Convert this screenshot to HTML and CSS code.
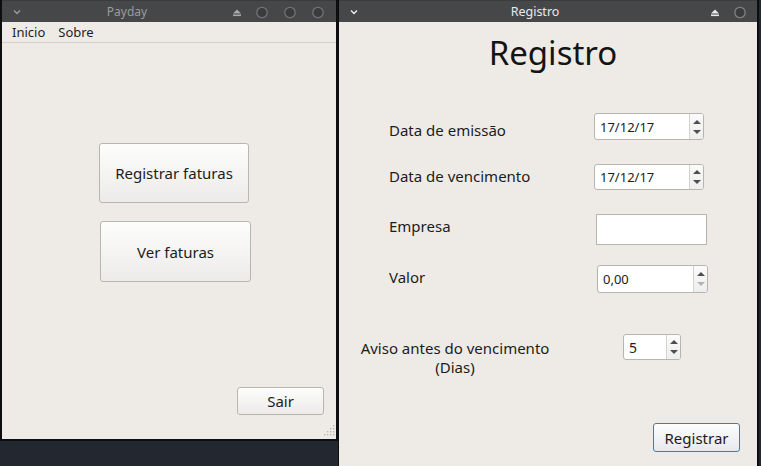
FILE: index.html
```html
<!DOCTYPE html>
<html lang="pt">
<head>
<meta charset="utf-8">
<title>Payday</title>
<link rel="stylesheet" href="styles.css">
</head>
<body>
<div class="win win-left">
  <div class="titlebar inactive">
    <svg class="chev" width="28" height="22" viewBox="0 0 28 22"><polyline points="12,9.5 15,12.5 18,9.5"/></svg>
    <div class="title">Payday</div>
    <svg class="ctrls" width="110" height="22" viewBox="0 0 110 22">
      <polygon class="ej" points="7,12.5 15,12.5 11,8.5"/>
      <rect class="ej" x="7" y="13.5" width="8" height="1.6"/>
      <circle class="cb" cx="36" cy="11.5" r="5.2"/>
      <circle class="cb" cx="64" cy="11.5" r="5.2"/>
      <circle class="cb" cx="92" cy="11.5" r="5.2"/>
    </svg>
  </div>
  <div class="menubar"><span>Inicio</span><span>Sobre</span></div>
  <div class="left-body">
    <button class="btn big b1">Registrar faturas</button>
    <button class="btn big b2">Ver faturas</button>
    <button class="btn sair">Sair</button>
    <svg class="grip" width="12" height="14" viewBox="0 0 12 14">
      <rect x="10" y="1" width="1.4" height="1.4"/>
      <rect x="7" y="4" width="1.4" height="1.4"/><rect x="10" y="4" width="1.4" height="1.4"/>
      <rect x="4" y="7" width="1.4" height="1.4"/><rect x="7" y="7" width="1.4" height="1.4"/><rect x="10" y="7" width="1.4" height="1.4"/>
      <rect x="1" y="10" width="1.4" height="1.4"/><rect x="4" y="10" width="1.4" height="1.4"/><rect x="7" y="10" width="1.4" height="1.4"/><rect x="10" y="10" width="1.4" height="1.4"/>
    </svg>
  </div>
</div>

<div class="win win-right">
  <div class="titlebar active">
    <svg class="chev" width="28" height="22" viewBox="0 0 28 22"><polyline points="12,9.5 15,12.5 18,9.5"/></svg>
    <div class="title">Registro</div>
    <svg class="ctrls" width="50" height="22" viewBox="0 0 50 22">
      <polygon class="ej" points="4,12.5 12,12.5 8,8.5"/>
      <rect class="ej" x="4" y="13.5" width="8" height="1.6"/>
      <circle class="cb" cx="33" cy="11.5" r="5.2"/>
    </svg>
  </div>
  <div class="content">
    <h1 class="heading">Registro</h1>
    <div class="row r1">
      <span class="lbl">Data de emissão</span>
      <div class="spin date"><span class="val">17/12/17</span><span class="arrows"><i class="up"></i><i class="dn"></i></span></div>
    </div>
    <div class="row r2">
      <span class="lbl">Data de vencimento</span>
      <div class="spin date d2"><span class="val">17/12/17</span><span class="arrows"><i class="up"></i><i class="dn"></i></span></div>
    </div>
    <div class="row r3">
      <span class="lbl">Empresa</span>
      <div class="field"></div>
    </div>
    <div class="row r4">
      <span class="lbl">Valor</span>
      <div class="spin money"><span class="val">0,00</span><span class="arrows"><i class="up"></i><i class="dn off"></i></span></div>
    </div>
    <div class="row r5">
      <span class="lbl two">Aviso antes do vencimento<br>(Dias)</span>
      <div class="spin days"><span class="val">5</span><span class="arrows"><i class="up"></i><i class="dn"></i></span></div>
    </div>
    <div class="actions"><button class="btn reg">Registrar</button></div>
  </div>
</div>
</body>
</html>
```

FILE: styles.css
```css
* { box-sizing: border-box; margin: 0; padding: 0; }
html, body { width: 761px; height: 466px; overflow: hidden; }
body {
  background: #232730;
  font-family: "Noto Sans", "Open Sans", sans-serif;
  color: #1c1c1c;
  position: relative;
}

.win {
  position: absolute;
  top: 0;
  background: #eeebe7;
  display: flex;
  flex-direction: column;
}
.win-left {
  left: 0;
  width: 338px;
  height: 441px;
  border-left: 2px solid #0e0e10;
  border-right: 2px solid #0e0e10;
  border-bottom: 2px solid #0e0e10;
}
.win-right {
  left: 338px;
  width: 421px;
  height: 466px;
  border-left: 1px solid #0e0e10;
  border-right: 2px solid #0e0e10;
}

/* title bars */
.titlebar {
  height: 22px;
  flex-shrink: 0;
  background: #464749;
  border-top: 1px solid #3a3b3d;
  display: flex;
  align-items: center;
}
.titlebar svg { display: block; flex-shrink: 0; }
.title {
  flex: 1;
  text-align: center;
  font-size: 12.5px;
  line-height: 20px;
}
.inactive .title { color: #9c9c9c; padding-right: 2px; font-size: 12px; }
.active .title { color: #e9e9e9; padding-right: 4px; }
.chev polyline { fill: none; stroke-width: 1.4; }
.inactive .chev polyline { stroke: #9a9a9a; }
.active .chev polyline { stroke: #ececec; }
.inactive .ej { fill: #a9a9a9; }
.active .ej { fill: #ececec; }
.cb { fill: #3a3b3d; stroke: #727375; stroke-width: 1.3; }
.active .cb { stroke: #808183; }

/* menu */
.menubar {
  height: 21px;
  flex-shrink: 0;
  border-bottom: 1px solid #d2cec9;
  display: flex;
  gap: 13px;
  padding-left: 10px;
  font-size: 13px;
  line-height: 20px;
  color: #1e1e1e;
}

/* buttons */
.btn {
  font-family: inherit;
  color: #1c1c1c;
  background: linear-gradient(#fdfdfc, #ecebea);
  border: 1px solid #b9b6b2;
  border-radius: 3px;
  display: flex;
  align-items: center;
  justify-content: center;
}

.left-body {
  flex: 1;
  position: relative;
  display: flex;
  flex-direction: column;
  align-items: flex-start;
}
.big { width: 150px; height: 60px; font-size: 15px; }
.b1 { margin: 100px 0 0 97px; }
.b2 { margin: 18px 0 0 98px; height: 61px; width: 151px; }
.sair { width: 87px; height: 28px; font-size: 15px; margin: 105px 0 0 235px; }
.grip { position: absolute; right: 1px; bottom: 1px; }
.grip rect { fill: #b8b5b1; }

/* right window */
.content {
  flex: 1;
  display: flex;
  flex-direction: column;
}
.heading {
  font-weight: 400;
  font-size: 33px;
  line-height: 44px;
  text-align: center;
  padding-left: 10px;
  margin-top: 9px;
  color: #141414;
}
.row {
  display: flex;
  align-items: flex-start;
  padding-left: 50px;
}
.lbl {
  width: 205px;
  font-size: 15px;
  line-height: 20px;
  color: #1c1c1c;
}
.r1 { margin-top: 38px; }
.r1 .lbl { padding-top: 7px; }
.r2 { margin-top: 24px; }
.r2 .lbl { padding-top: 2px; }
.r3 { margin-top: 24px; }
.r3 .lbl { padding-top: 2px; }
.r4 { margin-top: 20px; }
.r4 .lbl { padding-top: 2px; }
.r5 { margin-top: 41px; padding-left: 18px; }
.r5 .lbl { width: 196px; padding-top: 5px; line-height: 19px; text-align: center; margin-right: 70px; }

.spin {
  background: #fff;
  border: 1px solid #b8b5b0;
  border-radius: 3px;
  display: flex;
}
.val {
  flex: 1;
  font-size: 13px;
  color: #1c1c1c;
  padding-left: 5px;
  display: flex;
  align-items: center;
}
.arrows {
  width: 14px;
  border-left: 1px solid #d6d3cf;
  background: linear-gradient(#fbfbfb, #eeeeee);
  border-radius: 0 2px 2px 0;
  display: flex;
  flex-direction: column;
  justify-content: center;
  align-items: center;
  gap: 6px;
}
.arrows i { display: block; width: 0; height: 0; border-left: 4px solid transparent; border-right: 4px solid transparent; }
.arrows .up { border-bottom: 4px solid #4e4e4e; }
.arrows .dn { border-top: 4px solid #4e4e4e; }
.arrows .dn.off { border-top-color: #b4b4b4; }

.date { width: 110px; height: 27px; }
.d2 { height: 26px; }
.field {
  width: 111px;
  height: 31px;
  margin-left: 2px;
  background: #fff;
  border: 1px solid #b8b5b0;
}
.money { width: 111px; height: 28px; margin-left: 3px; }
.days { width: 58px; height: 26px; }
.days .val { font-size: 14px; }

.actions {
  display: flex;
  justify-content: flex-end;
  padding-right: 17px;
  margin-top: 46px;
}
.reg {
  width: 87px;
  height: 29px;
  font-size: 15px;
  border-color: #3c7fb7;
  background: linear-gradient(#fdfdfd, #e6e9ec);
}
```
